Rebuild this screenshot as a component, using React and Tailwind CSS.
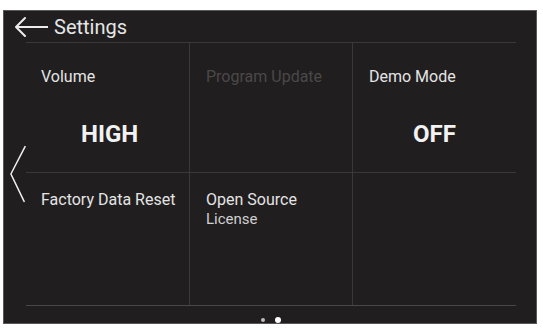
export default function App() {
    const font = { fontFamily: "Roboto, 'Noto Sans', sans-serif" };

    return (
        <main className="w-[543px] h-[329px] bg-white pt-[10px] pl-[3px]" style={font}>
            <div className="w-[534px] h-[314px] bg-[#211e1f] border border-[#5a5758] flex flex-col">
                {/* header */}
                <div className="h-[31px] flex items-center pl-[10px] gap-[6px] text-[#e6e6e6]">
                    <svg width="34" height="22" viewBox="0 0 34 22" fill="none">
                        <path d="M2 11 H34 M11 2 L2 11 L11 20" stroke="#ececec" strokeWidth="2" strokeLinecap="round" strokeLinejoin="round" />
                    </svg>
                    <span className="text-[20px] leading-none">Settings</span>
                </div>

                <div className="flex flex-1">
                    {/* left gutter with page chevron */}
                    <div className="w-[22px] flex items-start pt-[102px] pl-[5px]">
                        <svg width="18" height="60" viewBox="0 0 18 60" fill="none">
                            <path d="M17 1 L2 30 L16 59" stroke="#f0f0f0" strokeWidth="1.6" strokeLinecap="round" strokeLinejoin="round" />
                        </svg>
                    </div>

                    <div className="w-[490px] flex flex-col">
                        <div className="border-t border-[#3b3839] grid grid-cols-[164px_163px_163px] grid-rows-[130px_132px]">
                            <div className="border-r border-b border-[#3b3839] pl-[15px] pt-[25px] flex flex-col">
                                <span className="text-[16px] leading-[18px] text-[#e4e4e4]">Volume</span>
                                <span className="text-[24px] font-bold leading-none text-[#f2f2f2] mt-[36px] ml-[40px]">HIGH</span>
                            </div>
                            <div className="border-r border-b border-[#3b3839] pl-[16px] pt-[25px] flex flex-col">
                                <span className="text-[16px] leading-[18px] text-[#4b4849]">Program Update</span>
                            </div>
                            <div className="border-b border-[#3b3839] pl-[16px] pt-[25px] flex flex-col">
                                <span className="text-[16px] leading-[18px] text-[#e4e4e4]">Demo Mode</span>
                                <span className="text-[24px] font-bold leading-none text-[#f2f2f2] mt-[36px] ml-[44px]">OFF</span>
                            </div>
                            <div className="border-r border-[#3b3839] pl-[15px] pt-[18px] flex flex-col">
                                <span className="text-[16px] leading-[18px] text-[#e4e4e4]">Factory Data Reset</span>
                            </div>
                            <div className="border-r border-[#3b3839] pl-[16px] pt-[18px] flex flex-col">
                                <span className="text-[16px] leading-[18px] text-[#e4e4e4]">Open Source</span>
                                <span className="text-[15px] leading-[20px] text-[#cfcfcf]">License</span>
                            </div>
                            <div></div>
                        </div>
                        <div className="border-t border-[#4a4748] flex-1 flex items-end justify-center gap-[10px]">
                            <span className="w-[4px] h-[4px] rounded-full bg-[#bdbdbd] mb-[1px]"></span>
                            <span className="w-[6px] h-[6px] rounded-full bg-white"></span>
                        </div>
                    </div>
                </div>
            </div>
        </main>
    );
}
